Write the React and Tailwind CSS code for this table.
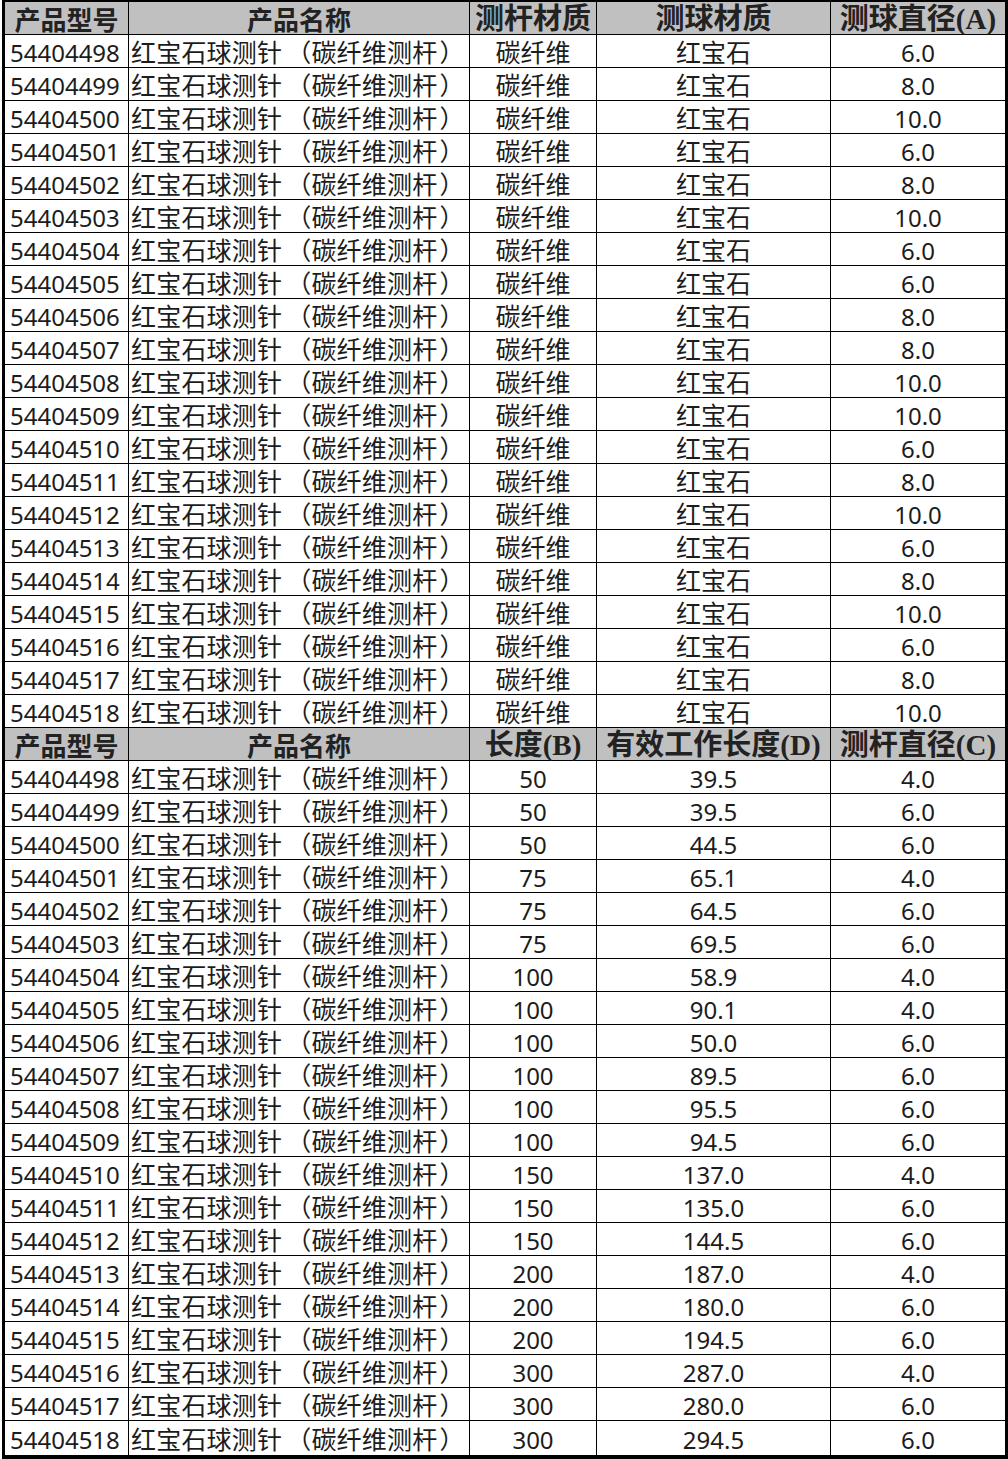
import React from "react";

const ids = Array.from({ length: 21 }, (_, i) => String(54404498 + i));
const diaA = ["6.0","8.0","10.0","6.0","8.0","10.0","6.0","6.0","8.0","8.0","10.0","10.0","6.0","8.0","10.0","6.0","8.0","10.0","6.0","8.0","10.0"];
const lenB = ["50","50","50","75","75","75","100","100","100","100","100","100","150","150","150","200","200","200","300","300","300"];
const effD = ["39.5","39.5","44.5","65.1","64.5","69.5","58.9","90.1","50.0","89.5","95.5","94.5","137.0","135.0","144.5","187.0","180.0","194.5","287.0","280.0","294.5"];
const diaC = ["4.0","6.0","6.0","4.0","6.0","6.0","4.0","4.0","6.0","6.0","6.0","6.0","4.0","6.0","6.0","4.0","6.0","6.0","4.0","6.0","6.0"];

const NAME = "__name__";

const rows = [];
rows.push({ h: true, c: ["产品型号", "产品名称", "测杆材质", "测球材质", "测球直径(A)"] });
ids.forEach((id, i) => rows.push({ c: [id, NAME, "碳纤维", "红宝石", diaA[i]] }));
rows.push({ h: true, c: ["产品型号", "产品名称", "长度(B)", "有效工作长度(D)", "测杆直径(C)"] });
ids.forEach((id, i) => rows.push({ c: [id, NAME, lenB[i], effD[i], diaC[i]] }));

const font = { fontFamily: '"Noto Sans", "Noto Sans CJK SC", sans-serif' };
const hsans = { fontFamily: '"Noto Sans CJK SC", "Noto Sans", sans-serif' };
const hserif = { fontFamily: '"Liberation Serif", "Noto Sans CJK SC", serif' };

function Name() {
  return (
    <span className="text-[25px] tracking-[0.2px]">
      红宝石球测针<span className="ml-[4px]">（</span>碳纤维测杆<span className="ml-[2px]">）</span>
    </span>
  );
}

export default function App() {
  return (
    <div className="bg-white w-[1008px] h-[1459px] pl-[2px]">
      <div className="w-[1006px] border-t-2 border-l-[3px] border-r-[3px] border-b-4 border-black">
        <div className="grid grid-cols-[124px_341px_127px_234px_174px]">
          {rows.map((r, ri) =>
            r.c.map((t, ci) => {
              const last = ri === rows.length - 1;
              const base =
                "flex items-center whitespace-nowrap " +
                (ci < 4 ? "border-r border-black " : "") +
                (last ? "h-[34px] " : "h-[33px] border-b border-black ");
              if (r.h) {
                const serif = ci >= 2;
                return (
                  <div
                    key={ri + "-" + ci}
                    className={
                      base +
                      "bg-[#c0c0c0] justify-center pt-[2px] font-bold text-[#222] leading-none " +
                      (serif ? "text-[29px]" : "text-[26px]")
                    }
                    style={serif ? hserif : hsans}
                  >
                    {t}
                  </div>
                );
              }
              const align =
                ci === 0 ? "justify-start pl-[5px]" : ci === 1 ? "justify-start pl-[2px]" : "justify-center";
              const isCjk = /[\u4e00-\u9fff]/.test(t);
              return (
                <div
                  key={ri + "-" + ci}
                  className={
                    base +
                    align +
                    " pt-[3px] text-[#1c1c1c] leading-none " +
                    (isCjk ? "text-[25px]" : "text-[24px]")
                  }
                  style={font}
                >
                  {t === NAME ? <Name /> : t}
                </div>
              );
            })
          )}
        </div>
      </div>
    </div>
  );
}
